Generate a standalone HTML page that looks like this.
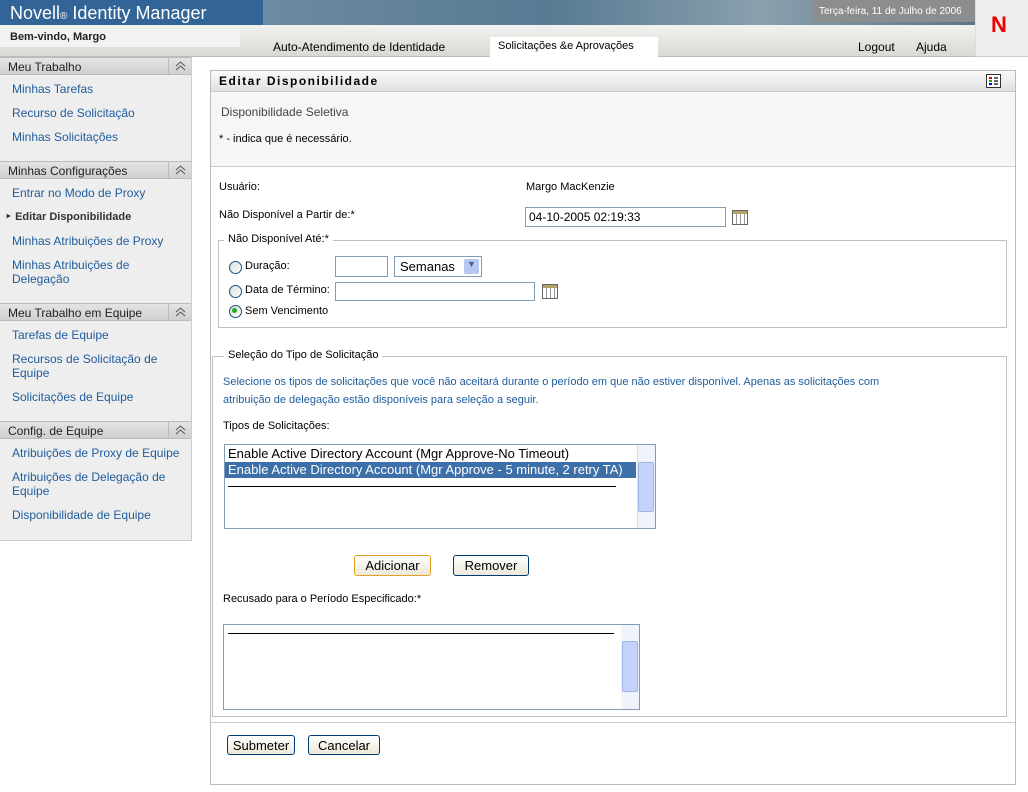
<!DOCTYPE html>
<html><head><meta charset="utf-8"><style>
*{margin:0;padding:0;box-sizing:border-box}
body{width:1028px;height:792px;position:relative;background:#fff;font-family:"Liberation Sans","DejaVu Sans",sans-serif;font-size:12px;color:#000;overflow:hidden}
.a{position:absolute;white-space:nowrap}
.lnk{color:#1f5c9c;font-size:12px}
.sh{position:absolute;left:0;width:191px;height:18px;background:linear-gradient(#e4e4e4,#cfcfcf);border-top:1px solid #bbb;border-bottom:1px solid #bbb;font-size:12px;color:#222;padding:2px 0 0 8px}
.sh:after{content:"";position:absolute;right:0;top:0;width:22px;height:16px;border-left:1px solid #bbb}
.sh svg{position:absolute;right:5px;top:3px}
.inp{position:absolute;border:1px solid #7f9db9;background:#fff;font-size:12px;padding:2px 3px}
.btn{position:absolute;border:1px solid #003c74;border-radius:3px;background:linear-gradient(#fff,#ece9d8);font-size:13px;text-align:center;padding-top:2px}
.rad{position:absolute;width:13px;height:13px;border-radius:50%;border:1px solid #1c5180;background:linear-gradient(135deg,#dcdcd6,#fff)}
.cal{position:absolute;width:16px;height:15px;border:1px solid #666;background:repeating-linear-gradient(90deg,#fff 0 3px,#999 3px 4px),#fff}
.cal:before{content:"";position:absolute;left:0;right:0;top:0;height:3px;background:#b3a36a}
.fs{position:absolute;border:1px solid #c0c0c0}
.lg{position:absolute;background:#fff;padding:0 4px;font-size:11px}
</style></head><body>
<div class="a" style="left:0;top:0;width:263px;height:25px;background:#326497"></div>
<div class="a" style="left:263px;top:0;width:712px;height:25px;background:linear-gradient(90deg,#6d8aa0,#587a92 40%,#8aa0ad 70%,#5f7486)"></div>
<div class="a" style="left:10px;top:3px;color:#fff;font-size:18px">Novell<span style="font-size:10px">®</span> Identity Manager</div>
<div class="a" style="left:813px;top:0;width:162px;height:22px;background:#8b8d8f;color:#fff;font-size:10px;padding:6px 0 0 6px">Terça-feira, 11 de Julho de 2006</div>
<div class="a" style="left:975px;top:0;width:53px;height:57px;background:#eeeeee;border-left:1px solid #ddd;border-bottom:1px solid #ccc"></div>
<div class="a" style="left:991px;top:12px;color:#e00;font-size:22px;font-weight:bold">N</div>
<div class="a" style="left:0;top:25px;width:975px;height:32px;background:linear-gradient(#f2f2f0,#d8d8d4);border-bottom:1px solid #bbb"></div>
<div class="a" style="left:0;top:25px;width:240px;height:22px;background:#f2f2f0"></div>
<div class="a" style="left:10px;top:31px;font-size:11px;font-weight:bold;color:#222">Bem-vindo, Margo</div>
<div class="a" style="left:273px;top:40px;font-size:12px">Auto-Atendimento de Identidade</div>
<div class="a" style="left:490px;top:37px;width:168px;height:20px;background:#fff;font-size:11px;padding:3px 0 0 8px">Solicitações &amp;e Aprovações</div>
<div class="a" style="left:858px;top:40px">Logout</div>
<div class="a" style="left:916px;top:40px">Ajuda</div>
<div class="a" style="left:0;top:57px;width:192px;height:484px;background:#eeeeee;border-right:1px solid #ccc;border-bottom:1px solid #ccc"></div>
<div class="sh" style="top:57px">Meu Trabalho<svg width="11" height="10"><path d="M1 5L5.5 1L10 5M1 9L5.5 5L10 9" stroke="#555" fill="none"/></svg></div>
<div class="a lnk" style="left:12px;top:82px">Minhas Tarefas</div>
<div class="a lnk" style="left:12px;top:106px">Recurso de Solicitação</div>
<div class="a lnk" style="left:12px;top:130px">Minhas Solicitações</div>
<div class="sh" style="top:161px">Minhas Configurações<svg width="11" height="10"><path d="M1 5L5.5 1L10 5M1 9L5.5 5L10 9" stroke="#555" fill="none"/></svg></div>
<div class="a lnk" style="left:12px;top:186px">Entrar no Modo de Proxy</div>
<div class="a" style="left:5px;top:210px;font-weight:bold;color:#333;font-size:11px">‣ Editar Disponibilidade</div>
<div class="a lnk" style="left:12px;top:234px">Minhas Atribuições de Proxy</div>
<div class="a lnk" style="left:12px;top:258px">Minhas Atribuições de<br>Delegação</div>
<div class="sh" style="top:303px">Meu Trabalho em Equipe<svg width="11" height="10"><path d="M1 5L5.5 1L10 5M1 9L5.5 5L10 9" stroke="#555" fill="none"/></svg></div>
<div class="a lnk" style="left:12px;top:328px">Tarefas de Equipe</div>
<div class="a lnk" style="left:12px;top:352px">Recursos de Solicitação de<br>Equipe</div>
<div class="a lnk" style="left:12px;top:390px">Solicitações de Equipe</div>
<div class="sh" style="top:421px">Config. de Equipe<svg width="11" height="10"><path d="M1 5L5.5 1L10 5M1 9L5.5 5L10 9" stroke="#555" fill="none"/></svg></div>
<div class="a lnk" style="left:12px;top:446px">Atribuições de Proxy de Equipe</div>
<div class="a lnk" style="left:12px;top:470px">Atribuições de Delegação de<br>Equipe</div>
<div class="a lnk" style="left:12px;top:508px">Disponibilidade de Equipe</div>
<div class="a" style="left:210px;top:70px;width:806px;height:715px;border:1px solid #bbb"></div>
<div class="a" style="left:211px;top:71px;width:804px;height:21px;background:linear-gradient(#fafafa,#e0e0e0);border-bottom:1px solid #c8c8c8"></div>
<div class="a" style="left:219px;top:74px;font-weight:bold;font-size:12px;letter-spacing:1.5px">Editar Disponibilidade</div>
<div class="a" style="left:986px;top:74px;width:15px;height:14px;border:1px solid #333;background:#fff"></div>
<div class="a" style="left:989px;top:77px;width:3px;height:2px;background:#e00"></div>
<div class="a" style="left:989px;top:80px;width:3px;height:2px;background:#2a2"></div>
<div class="a" style="left:989px;top:83px;width:3px;height:2px;background:#00e"></div>
<div class="a" style="left:994px;top:77px;width:4px;height:8px;background:repeating-linear-gradient(#666 0 2px,#fff 2px 3px)"></div>
<div class="a" style="left:211px;top:92px;width:804px;height:75px;background:#f6f6f6;border-bottom:1px solid #ccc"></div>
<div class="a" style="left:221px;top:105px;color:#444">Disponibilidade Seletiva</div>
<div class="a" style="left:219px;top:133px;font-size:11px">* - indica que é necessário.</div>
<div class="a" style="left:219px;top:181px;font-size:11px">Usuário:</div>
<div class="a" style="left:526px;top:181px;font-size:11px">Margo MacKenzie</div>
<div class="a" style="left:219px;top:209px;font-size:11px">Não Disponível a Partir de:*</div>
<div class="inp" style="left:525px;top:207px;width:201px;height:20px">04-10-2005 02:19:33</div>
<div class="cal" style="left:732px;top:210px"></div>
<div class="fs" style="left:218px;top:240px;width:789px;height:88px"></div>
<div class="lg" style="left:224px;top:233px">Não Disponível Até:*</div>
<div class="rad" style="left:229px;top:261px"></div><div class="a" style="left:245px;top:260px;font-size:11px">Duração:</div>
<div class="inp" style="left:335px;top:256px;width:53px;height:21px"></div>
<div class="inp" style="left:394px;top:256px;width:88px;height:21px;font-size:13px;padding:2px 5px">Semanas<span style="position:absolute;right:2px;top:2px;width:15px;height:15px;background:#b5c9f0;border-radius:2px;font-size:9px;text-align:center;color:#4d6185">▼</span></div>
<div class="rad" style="left:229px;top:285px"></div><div class="a" style="left:245px;top:284px;font-size:11px">Data de Término:</div>
<div class="inp" style="left:335px;top:282px;width:200px;height:19px"></div>
<div class="cal" style="left:542px;top:284px"></div>
<div class="rad" style="left:229px;top:305px"></div><div class="a" style="left:232px;top:308px;width:5px;height:5px;border-radius:50%;background:#2a2"></div><div class="a" style="left:245px;top:305px;font-size:11px">Sem Vencimento</div>
<div class="fs" style="left:212px;top:356px;width:795px;height:361px"></div>
<div class="lg" style="left:224px;top:349px">Seleção do Tipo de Solicitação</div>
<div class="a" style="left:223px;top:373px;color:#1f5c9c;font-size:11px;line-height:18px">Selecione os tipos de solicitações que você não aceitará durante o período em que não estiver disponível. Apenas as solicitações com<br>atribuição de delegação estão disponíveis para seleção a seguir.</div>
<div class="a" style="left:223px;top:420px;font-size:11px">Tipos de Solicitações:</div>
<div class="a" style="left:224px;top:444px;width:432px;height:85px;border:1px solid #7f9db9;background:#fff"></div>
<div class="a" style="left:228px;top:446px;font-size:13px">Enable Active Directory Account (Mgr Approve-No Timeout)</div>
<div class="a" style="left:225px;top:462px;width:411px;height:16px;background:#3d6fa8;color:#fff;font-size:13px;padding-left:3px">Enable Active Directory Account (Mgr Approve - 5 minute, 2 retry TA)</div>
<div class="a" style="left:228px;top:486px;width:388px;height:1px;background:#000"></div>
<div class="a" style="left:637px;top:445px;width:18px;height:83px;background:#f0f3fb;border-left:1px solid #dde"></div>
<div class="a" style="left:638px;top:462px;width:16px;height:50px;background:#c3d3fd;border:1px solid #a0b4e8;border-radius:2px"></div>
<div class="btn" style="left:354px;top:555px;width:77px;height:21px;border-color:#e5a025">Adicionar</div>
<div class="btn" style="left:453px;top:555px;width:76px;height:21px">Remover</div>
<div class="a" style="left:223px;top:593px;font-size:11px">Recusado para o Período Especificado:*</div>
<div class="a" style="left:223px;top:624px;width:417px;height:86px;border:1px solid #7f9db9;background:#fff"></div>
<div class="a" style="left:228px;top:633px;width:386px;height:1px;background:#000"></div>
<div class="a" style="left:621px;top:625px;width:18px;height:84px;background:#f0f3fb"></div>
<div class="a" style="left:622px;top:641px;width:16px;height:51px;background:#c3d3fd;border:1px solid #a0b4e8;border-radius:2px"></div>
<div class="a" style="left:211px;top:722px;width:804px;height:1px;background:#ccc"></div>
<div class="btn" style="left:227px;top:735px;width:68px;height:20px">Submeter</div>
<div class="btn" style="left:308px;top:735px;width:72px;height:20px">Cancelar</div>
</body></html>
